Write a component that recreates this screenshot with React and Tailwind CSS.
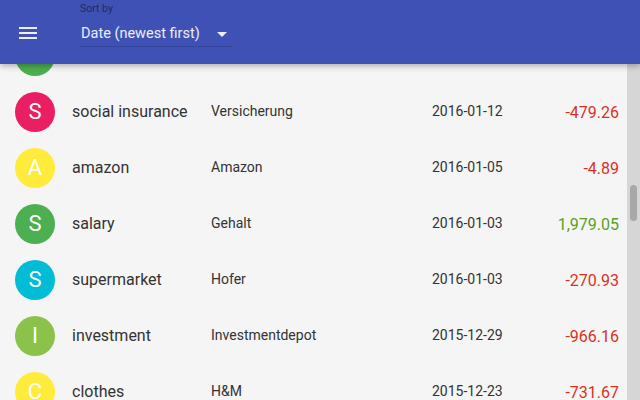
const rows = [
  { letter: "S", color: "bg-[#4caf50]", name: "salary", category: "Gehalt", date: "2016-01-14", amount: "1,979.05", income: true },
  { letter: "S", color: "bg-[#e91e63]", name: "social insurance", category: "Versicherung", date: "2016-01-12", amount: "-479.26" },
  { letter: "A", color: "bg-[#ffeb3b]", name: "amazon", category: "Amazon", date: "2016-01-05", amount: "-4.89" },
  { letter: "S", color: "bg-[#4caf50]", name: "salary", category: "Gehalt", date: "2016-01-03", amount: "1,979.05", income: true },
  { letter: "S", color: "bg-[#00bcd4]", name: "supermarket", category: "Hofer", date: "2016-01-03", amount: "-270.93" },
  { letter: "I", color: "bg-[#8bc34a]", name: "investment", category: "Investmentdepot", date: "2015-12-29", amount: "-966.16" },
  { letter: "C", color: "bg-[#ffeb3b]", name: "clothes", category: "H&M", date: "2015-12-23", amount: "-731.67" },
];

function Row({ row }) {
  return (
    <div className="flex h-14 shrink-0 items-center text-[#333]">
      <div className={`ml-[15px] flex h-10 w-10 shrink-0 items-center justify-center rounded-full text-[22px] leading-none text-white ${row.color}`}>
        {row.letter}
      </div>
      <div className="ml-[17px] w-[139px] shrink-0 text-[16px] whitespace-nowrap">{row.name}</div>
      <div className="mb-[2px] w-[221px] shrink-0 text-[14px]">{row.category}</div>
      <div className="mb-[2px] text-[14px]">{row.date}</div>
      <div className={`mt-[2px] flex-1 pr-2 text-right text-[16px] ${row.income ? "text-[#5b9f24]" : "text-[#d8321f]"}`}>
        {row.amount}
      </div>
    </div>
  );
}

export default function App() {
  return (
    <div className="relative h-[400px] w-[640px] overflow-hidden bg-[#f5f5f5] font-['Roboto',sans-serif]">
      <header className="absolute inset-x-0 top-0 z-10 flex h-16 bg-[#3f51b5] pl-[19px] shadow-[0_2px_6px_rgba(0,0,0,0.3)]">
        <div className="mt-[27px] flex w-[18px] flex-col gap-[3px]">
          <span className="h-[2px] bg-white/90" />
          <span className="h-[2px] bg-white/90" />
          <span className="h-[2px] bg-white/90" />
        </div>
        <div className="ml-[43px] pt-[3px]">
          <div className="text-[10.5px] leading-[12px] text-[#1e2a66]">Sort by</div>
          <div className="mt-[10px] flex w-[153px] items-center border-b border-[#34459c] pb-[3px]">
            <span className="pl-[1px] text-[14.5px] leading-[18px] text-white/90">Date (newest first)</span>
            <svg className="ml-auto mr-[6px]" width="10" height="5" viewBox="0 0 10 5">
              <path d="M0 0h10L5 5z" fill="rgba(255,255,255,0.9)" />
            </svg>
          </div>
        </div>
      </header>

      <div className="flex h-full">
        <div className="flex flex-1 flex-col pt-[28px]">
          {rows.map((row, i) => (
            <Row key={i} row={row} />
          ))}
        </div>
        <div className="w-[13px] shrink-0 bg-[#d6d6d6] pt-[185px]">
          <div className="mx-[3px] h-[36px] rounded-full bg-[#a8a8a8]" />
        </div>
      </div>
    </div>
  );
}
